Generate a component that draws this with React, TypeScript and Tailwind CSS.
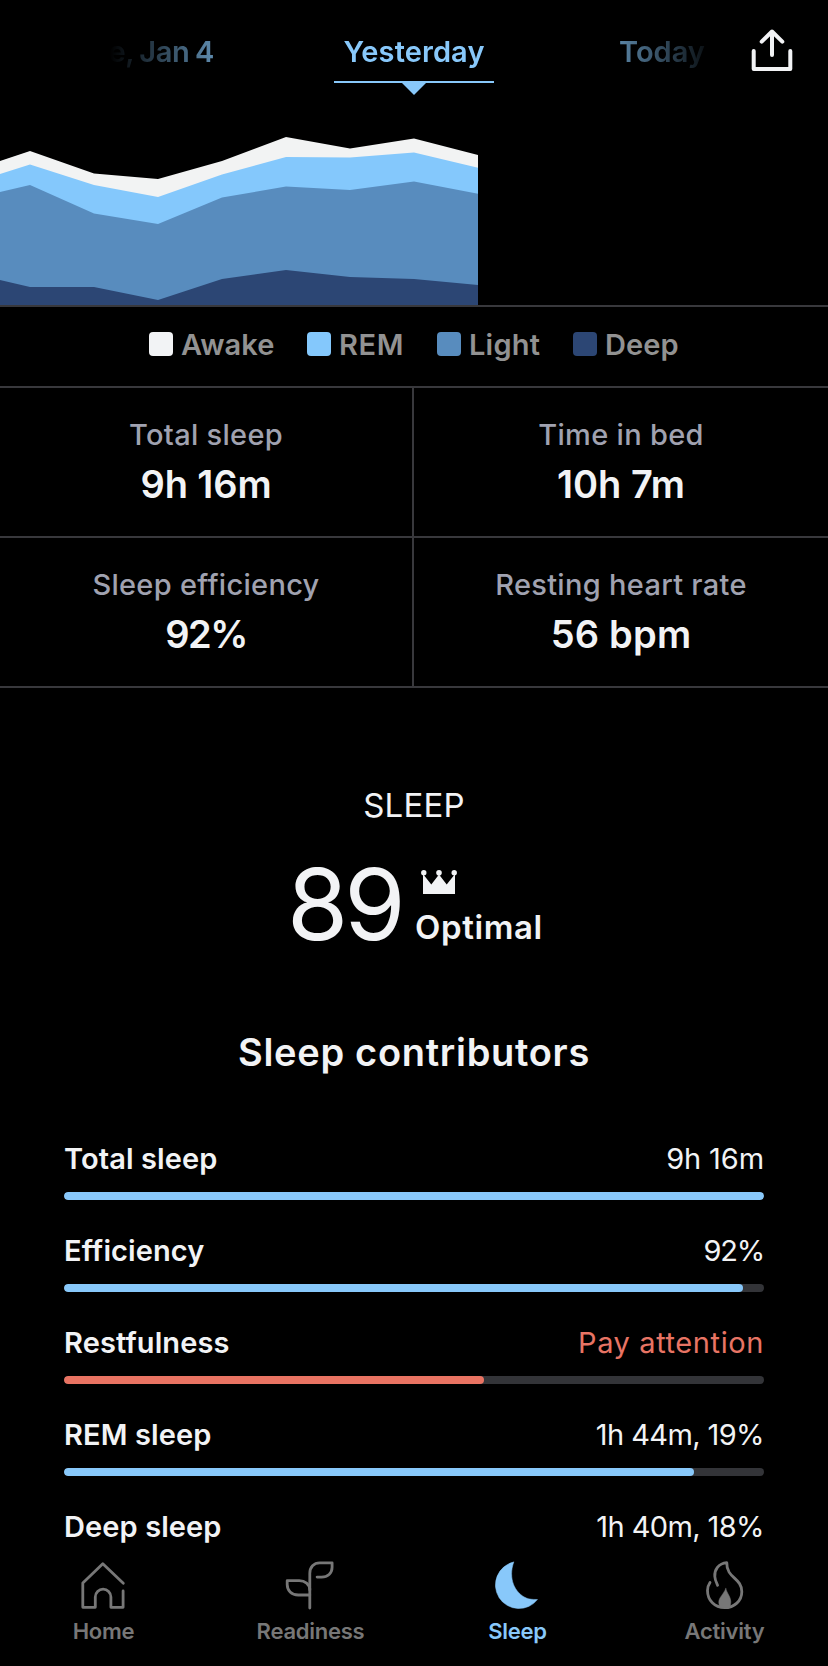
import type { ReactNode } from 'react'
import clsx from 'clsx'

const legend = [
  { label: 'Awake', color: 'bg-[#f2f3f5]', tracking: 'tracking-[0.1px]', width: 'w-[158px]' },
  { label: 'REM', color: 'bg-[#84c8fc]', tracking: 'tracking-[0.6px]', width: 'w-[130px]' },
  { label: 'Light', color: 'bg-[#588cbe]', tracking: 'tracking-[0.2px]', width: 'w-[136px]' },
  { label: 'Deep', color: 'bg-[#2c4674]', tracking: 'tracking-[0.1px]', width: 'w-[106px]' },
]

const stats = [
  { label: 'Total sleep', value: '9h 16m', tracking: 'tracking-[-0.1px]' },
  { label: 'Time in bed', value: '10h 7m', tracking: 'tracking-[0px]' },
  { label: 'Sleep efficiency', value: '92%', tracking: 'tracking-[-1.5px]' },
  { label: 'Resting heart rate', value: '56 bpm', tracking: 'tracking-[0.2px]' },
]

const contributors = [
  { label: 'Total sleep', value: '9h 16m', tracking: 'tracking-[-0.1px]', fill: 100 },
  { label: 'Efficiency', value: '92%', tracking: 'tracking-[-1.2px]', fill: 97 },
  { label: 'Restfulness', value: 'Pay attention', tracking: 'tracking-[0.6px]', fill: 60, alert: true },
  { label: 'REM sleep', value: '1h 44m, 19%', tracking: 'tracking-[-0.6px]', fill: 90 },
  { label: 'Deep sleep', value: '1h 40m, 18%', tracking: 'tracking-[-0.6px]' },
]

const stages = [
  { color: '#f2f3f3', points: '0,61 30,51 94,73.5 158,79 222,61 286,37 350,48.5 414,38.5 478,55' },
  { color: '#84c8fc', points: '0,74 30,64.5 94,85 158,97 222,74.5 286,57 350,57.5 414,52.5 478,67.7' },
  { color: '#588cbe', points: '0,92 30,85 94,113.5 158,124 222,97.5 286,86.5 350,90 414,81.5 478,93.7' },
  { color: '#2c4674', points: '0,180 30,187 94,187 158,200 222,179 286,170 350,177 414,179 478,185' },
]

function ShareIcon() {
  return (
    <svg width="44" height="46" viewBox="0 0 44 46" fill="none" stroke="#f2f3f5" strokeWidth="4" strokeLinecap="round">
      <path d="M3.7 24v18h36.6V24" strokeLinejoin="round" />
      <path d="M22 28V4.5M11.7 14.7 22 4.5l10.3 10.2" strokeLinejoin="round" />
    </svg>
  )
}

function CrownIcon() {
  return (
    <svg width="36" height="25" viewBox="0 0 36 25" fill="#f2f3f5">
      <path d="M2 24V4l8.3 10.5L18 4.5l7.7 10L34 4v20z" />
      <circle cx="2.8" cy="2.8" r="2.7" />
      <circle cx="18" cy="2.8" r="2.8" />
      <circle cx="33.2" cy="2.8" r="2.7" />
    </svg>
  )
}

function NavIcon({ children }: { children: ReactNode }) {
  return (
    <svg
      width="48"
      height="48"
      viewBox="0.7 0 48 48"
      fill="none"
      stroke="currentColor"
      strokeWidth="2.8"
      strokeLinecap="round"
      strokeLinejoin="round"
      className="overflow-visible"
    >
      {children}
    </svg>
  )
}

const tabs = [
  {
    label: 'Home',
    icon: <path d="M44 22.3 23.5 2.7 3.5 22v24.3H16V36a7.8 7.8 0 0 1 15.6 0v10.3h12.2V30" />,
  },
  {
    label: 'Readiness',
    icon: (
      <>
        <path d="M23.5 47V12.5C23.5 6 27.5 1.8 33.5 1.8h12.3v4.5c0 6-4.5 9.8-10.5 9.8h-4.5" />
        <path d="M23.5 34H12C5 34 .9 29.5.9 23.5v-3.8h12c5.6 0 10.6 3.5 10.6 9.3" />
      </>
    ),
  },
  {
    label: 'Sleep',
    icon: (
      <path
        d="M20.2 1A23.6 23.6 0 1 0 44.2 38.6C43.6 38.2 37.5 39 33 37 21.5 32 14.5 17.5 20.4 1.2z"
        fill="currentColor"
        strokeWidth="0.5"
      />
    ),
    active: true,
  },
  {
    label: 'Activity',
    icon: (
      <>
        <path d="M9.7 21.5C8 24 7.2 26.5 7.2 29.5 7.2 39.5 14.5 46.7 24.3 46.7 34 46.7 41.5 39.8 41.5 30.7 41.5 16.5 26 17.5 26.5 1.7 18 2.5 14 9 14.5 15.5 14.8 19.5 16 21.5 17.3 24.3" />
        <path
          d="M25.5 27.5C26.500 32 30.5 36 30.5 40.5c0 2.500-.5 4.500-1.500 6h-9c-1-1.500-1.500-3.500-1.500-5.500 0-4.500 5-8 7-13.500z"
          fill="currentColor"
          strokeWidth="0.5"
        />
      </>
    ),
  },
]

export default function App() {
  return (
    <div className="flex h-[1666px] w-[828px] flex-col overflow-hidden bg-black font-['Inter','Liberation_Sans',sans-serif] text-[#f2f3f5]">
      {/* Day picker */}
      <header className="flex h-[100px] shrink-0 pl-[110px]">
        <div className="flex w-[608px] overflow-hidden text-[29px] font-semibold leading-[35px] text-[#88c8fa] [mask-image:linear-gradient(to_right,transparent,black_150px,black_458px,transparent)]">
          <div className="flex w-[224px] shrink-0 justify-end whitespace-nowrap pr-[120px] pt-[34px] tracking-[-0.3px] [word-spacing:-1.5px]">
            Tue, Jan 4
          </div>
          <div className="flex w-[160px] shrink-0 flex-col items-center pt-[34px]">
            <span className="tracking-[0.1px]">Yesterday</span>
            <div className="mt-3 h-[2px] w-full shrink-0 bg-[#88c8fa]" />
            <div className="h-3 w-6 shrink-0 bg-[#88c8fa] [clip-path:polygon(0_0,100%_0,50%_100%)]" />
          </div>
          <div className="w-[224px] shrink-0 pl-[125px] pt-[34px]">Today</div>
        </div>
        <button className="ml-8 mt-[27px] h-[46px]">
          <ShareIcon />
        </button>
      </header>

      {/* Sleep stages chart */}
      <section className="h-[207px] shrink-0 border-b-2 border-[#38383c]">
        <svg width="828" height="205" viewBox="0 0 828 205">
          {stages.map(stage => (
            <polygon key={stage.color} points={`${stage.points} 478,205 0,205`} fill={stage.color} />
          ))}
        </svg>
      </section>

      <section className="flex h-[81px] shrink-0 border-b-2 border-[#38383c] pl-[149px] pt-[24px]">
        {legend.map(item => (
          <div key={item.label} className={clsx('flex h-[26px] shrink-0 items-center gap-2', item.width)}>
            <span className={clsx('size-6 shrink-0 rounded-[4px]', item.color)} />
            <span className={clsx('text-[29px] font-semibold leading-[35px] text-[#929292]', item.tracking)}>
              {item.label}
            </span>
          </div>
        ))}
      </section>

      {/* Key figures */}
      <section className="grid shrink-0 grid-cols-2">
        {stats.map((stat, i) => (
          <div
            key={stat.label}
            className={clsx(
              'flex h-[150px] flex-col items-center border-b-2 border-[#38383c] pt-[29px]',
              i % 2 === 0 && 'border-r-2',
            )}
          >
            <span className="text-[29px] font-medium leading-[35px] tracking-[0.3px] text-[#a0a2b0]">{stat.label}</span>
            <span className={clsx('mt-[9px] text-[38px] font-semibold leading-[46px]', stat.tracking)}>
              {stat.value}
            </span>
          </div>
        ))}
      </section>

      {/* Score */}
      <section className="flex shrink-0 flex-col items-center pt-[97px]">
        <h2 className="text-[33px] leading-[40px] tracking-[0.2px]">SLEEP</h2>
        <div className="mt-[28px] flex h-[110px] w-[254px] items-start">
          <span className="w-[128px] shrink-0 text-[99px] leading-[103px] tracking-[-4px]">89</span>
          <div className="pt-[17px]">
            <div className="pl-[6px]">
              <CrownIcon />
            </div>
            <div className="mt-[12px] text-[33px] font-semibold leading-[40px] tracking-[0.6px]">Optimal</div>
          </div>
        </div>
      </section>

      {/* Contributors */}
      <section className="flex shrink-0 flex-col px-16 pt-[66px]">
        <h2 className="text-center text-[38px] font-semibold leading-[46px] tracking-[0.7px]">Sleep contributors</h2>
        <div className="mt-[66px]">
          {contributors.map(item => (
            <div key={item.label} className="h-[92px] last:h-[35px]">
              <div className="flex justify-between text-[29px] leading-[35px]">
                <span className="font-semibold tracking-[0.1px]">{item.label}</span>
                <span className={clsx(item.tracking, item.alert && 'text-[#e87464]')}>{item.value}</span>
              </div>
              {item.fill && (
                <div className="mt-4 h-2 overflow-hidden rounded-full bg-[#333438]">
                  <div
                    className={clsx('h-full rounded-full', item.alert ? 'bg-[#e97362]' : 'bg-[#88c8fa]')}
                    style={{ width: `${item.fill}%` }}
                  />
                </div>
              )}
            </div>
          ))}
        </div>
      </section>

      {/* Bottom navigation */}
      <nav className="mt-auto grid h-[105px] shrink-0 grid-cols-4">
        {tabs.map(tab => (
          <button
            key={tab.label}
            className={clsx('flex flex-col items-center', tab.active ? 'text-[#88c8fa]' : 'text-[#777777]')}
          >
            <NavIcon>{tab.icon}</NavIcon>
            <span className="mt-[9px] text-[22px] font-semibold leading-[26px] tracking-[-0.25px]">{tab.label}</span>
          </button>
        ))}
      </nav>
    </div>
  )
}
